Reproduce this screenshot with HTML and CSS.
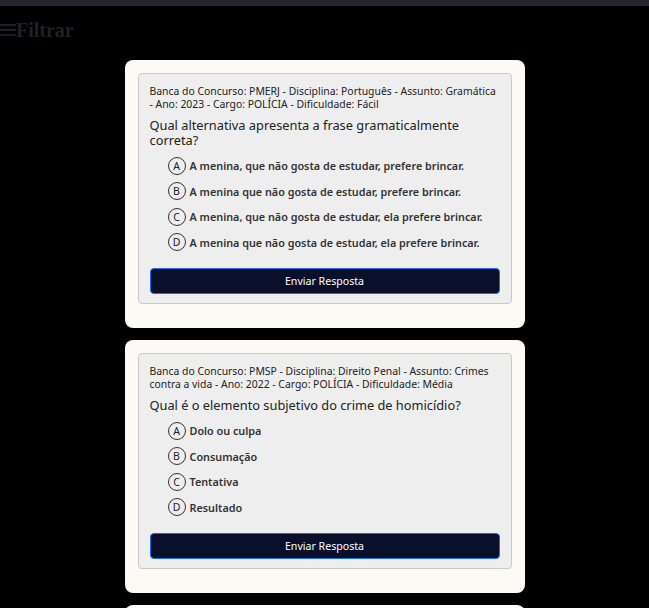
FILE: index.html
```html
<!DOCTYPE html>
<html lang="pt-BR">
<head>
<meta charset="utf-8">
<title>Questões</title>
<link rel="stylesheet" href="styles.css">
</head>
<body>
<div class="topbar"></div>
<header class="filter">
  <span class="burger"><i></i><i></i><i></i></span>
  <span class="filter-label">Filtrar</span>
</header>
<main class="list">
  <section class="card">
    <div class="question">
      <p class="meta">Banca do Concurso: PMERJ - Disciplina: Português - Assunto: Gramática - Ano: 2023 - Cargo: POLÍCIA - Dificuldade: Fácil</p>
      <h3 class="title">Qual alternativa apresenta a frase gramaticalmente correta?</h3>
      <ul class="options">
        <li class="option"><span class="letter">A</span><span class="text">A menina, que não gosta de estudar, prefere brincar.</span></li>
        <li class="option"><span class="letter">B</span><span class="text">A menina que não gosta de estudar, prefere brincar.</span></li>
        <li class="option"><span class="letter">C</span><span class="text">A menina, que não gosta de estudar, ela prefere brincar.</span></li>
        <li class="option"><span class="letter">D</span><span class="text">A menina que não gosta de estudar, ela prefere brincar.</span></li>
      </ul>
      <button class="submit">Enviar Resposta</button>
    </div>
  </section>
  <section class="card">
    <div class="question">
      <p class="meta">Banca do Concurso: PMSP - Disciplina: Direito Penal - Assunto: Crimes contra a vida - Ano: 2022 - Cargo: POLÍCIA - Dificuldade: Média</p>
      <h3 class="title">Qual é o elemento subjetivo do crime de homicídio?</h3>
      <ul class="options">
        <li class="option"><span class="letter">A</span><span class="text">Dolo ou culpa</span></li>
        <li class="option"><span class="letter">B</span><span class="text">Consumação</span></li>
        <li class="option"><span class="letter">C</span><span class="text">Tentativa</span></li>
        <li class="option"><span class="letter">D</span><span class="text">Resultado</span></li>
      </ul>
      <button class="submit">Enviar Resposta</button>
    </div>
  </section>
  <section class="card">
    <div class="question">
      <p class="meta">Banca do Concurso: PCSP - Disciplina: Direito Constitucional - Assunto: Direitos fundamentais - Ano: 2021 - Cargo: POLÍCIA - Dificuldade: Difícil</p>
    </div>
  </section>
</main>
</body>
</html>
```

FILE: styles.css
```css
* { box-sizing: border-box; }
html, body { margin: 0; padding: 0; background: #000; }
body { font-family: "Noto Sans", "Open Sans", sans-serif; }

.topbar { height: 6px; background: #22252d; }

.filter {
  display: flex;
  align-items: center;
  height: 48px;
  color: #1e2128;
  font-family: "Liberation Serif", serif;
  font-weight: bold;
  font-size: 20px;
}
.burger {
  display: flex;
  flex-direction: column;
  gap: 3px;
  width: 16px;
  margin-top: -1px;
}
.burger i { display: block; height: 2px; background: #1e2128; }

.list {
  width: 400px;
  margin: 6px auto 0;
  display: flex;
  flex-direction: column;
  gap: 12px;
}
.card {
  background: #fdfaf5;
  border-radius: 8px;
  padding: 13px 13px 24px;
}
.question {
  background: #eeeeef;
  border: 1px solid #c9c9c9;
  border-radius: 4px;
  padding: 11px 11px 9px;
}
.meta {
  margin: 0;
  font-size: 10.4px;
  line-height: 13px;
  color: #222;
}
.title {
  margin: 7px 0 5px;
  font-size: 12.8px;
  line-height: 15px;
  font-weight: normal;
  color: #222;
}
.options {
  list-style: none;
  margin: 0;
  padding: 0 0 0 18px;
}
.option {
  display: flex;
  align-items: center;
  gap: 4px;
  height: 25.5px;
  font-size: 10.8px;
  font-weight: 600;
  color: #333;
}
.letter {
  width: 18px;
  height: 18px;
  border: 1px solid #333;
  border-radius: 50%;
  display: flex;
  align-items: center;
  justify-content: center;
  font-weight: normal;
  font-size: 10.5px;
  color: #222;
}
.submit {
  display: block;
  width: 100%;
  height: 26px;
  margin-top: 13px;
  background: #0a102b;
  border: 1px solid #1a6cf0;
  border-radius: 4px;
  color: #fff;
  font-family: inherit;
  font-size: 10.6px;
}
```
